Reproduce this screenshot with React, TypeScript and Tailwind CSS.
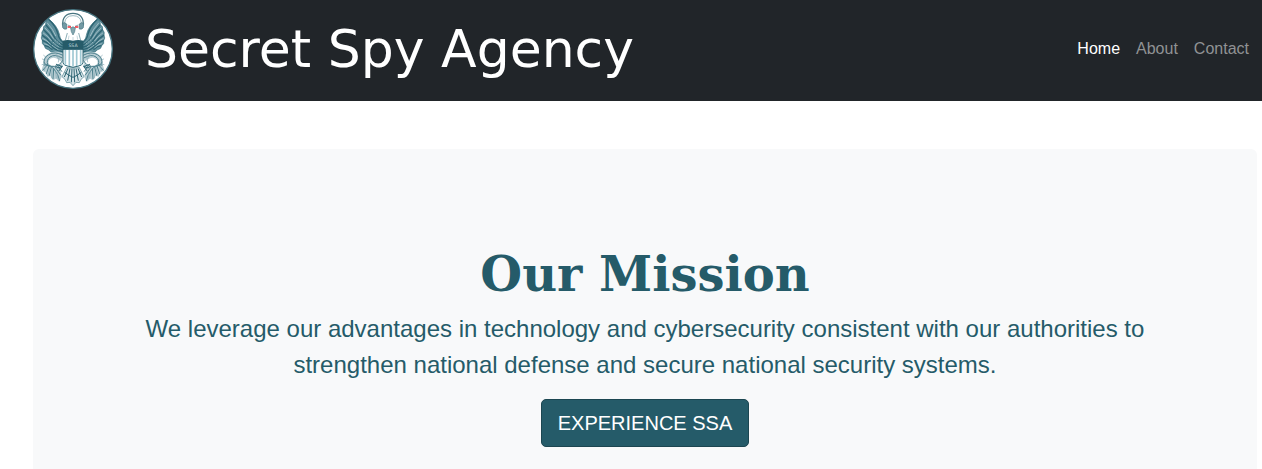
const navLinks = [
  { label: "Home", active: true },
  { label: "About", active: false },
  { label: "Contact", active: false },
];

function Wing() {
  return (
    <g strokeLinecap="round" strokeLinejoin="round">
      <path
        d="M47 30 Q37 34 38 47 Q29 52 31 62 Q24 69 27 79 Q22 87 28 95 Q25 104 34 110 Q35 120 46 122 Q53 132 67 130 Q76 138 90 134 L90 98 Q80 89 79 75 Q73 50 47 30Z"
        fill="#5f8f9c"
        stroke="#3d7280"
        strokeWidth="2"
      />
      <g fill="none" stroke="#2c6473" strokeWidth="4">
        <path d="M48 32 Q69 51 75 75 Q78 91 89 99" />
        <path d="M39 48 Q55 64 64 84 Q70 97 88 107" />
        <path d="M32 62 Q48 76 57 91 Q67 108 88 114" />
        <path d="M28 79 Q42 87 52 100 Q66 117 88 121" />
        <path d="M29 95 Q42 99 51 109 Q66 124 88 128" />
        <path d="M36 110 Q47 111 57 121" />
      </g>
      <g fill="none" stroke="#bcd2d8" strokeWidth="2">
        <path d="M43 42 Q60 60 68 80" />
        <path d="M36 57 Q52 72 61 88" />
        <path d="M31 72 Q46 82 55 95" />
        <path d="M29 88 Q42 94 52 105" />
        <path d="M35 104 Q46 106 55 116" />
        <path d="M66 92 L82 106 M61 100 L79 115 M58 109 L78 124" strokeDasharray="4 4" />
      </g>
    </g>
  );
}

function Talon() {
  return (
    <g strokeLinecap="round" strokeLinejoin="round">
      <path
        d="M90 132 Q62 121 45 135 Q28 145 31 166 L26 182 L37 190 L43 203 L52 201 L60 214 L69 209 L79 219 L86 204 L82 181 L90 172 L84 158 Q77 174 61 170 Q43 168 47 155 Q54 143 69 148 L84 157 L90 151Z"
        fill="#b9ced4"
      />
      <g fill="none" stroke="#4c808d" strokeWidth="3">
        <path d="M88 138 Q65 126 47 137 Q30 147 34 165" />
        <path d="M86 146 Q65 134 51 144 Q39 153 44 167" />
        <path d="M34 162 Q42 175 65 172 Q81 170 88 155" />
        <path d="M33 168 Q52 164 65 183 Q76 196 80 215" />
        <path d="M42 169 L29 184 M48 171 L40 194 M55 174 L49 199 M62 180 L60 209" />
        <path d="M66 174 L83 198 M73 169 L86 187" />
      </g>
      <g fill="none" stroke="#85a9b3" strokeWidth="2">
        <path d="M39 145 L32 139 M34 153 L28 150 M36 164 L27 167 M69 136 L76 149 M79 143 L76 159" />
        <path d="M38 173 L33 187 M52 174 L45 198 M58 177 L55 207 M68 187 L70 207 M72 190 L75 210" />
      </g>
      <path d="M88 172 L75 177 L68 172 M87 174 L78 185 M86 172 L70 166" fill="none" stroke="#2c6473" strokeWidth="3" />
    </g>
  );
}

function Seal() {
  return (
    <svg viewBox="0 0 240 240" className="size-20 shrink-0" role="img" aria-label="SSA seal">
      <circle cx="120" cy="120" r="118" fill="#fff" stroke="#477581" strokeWidth="4" />
      <Wing />
      <g transform="translate(240 0) scale(-1 1)">
        <Wing />
      </g>
      <Talon />
      <g transform="translate(240 0) scale(-1 1)">
        <Talon />
      </g>
      <path
        d="M102 174 L87 203 L96 211 L101 221 L111 220 L120 230 L129 220 L139 221 L144 211 L153 203 L138 174Z"
        fill="#d6e4e8"
        stroke="#4c808d"
        strokeWidth="2"
      />
      <path
        d="M105 178 L94 204 M111 178 L104 215 M117 178 L115 220 M123 178 L125 220 M129 178 L136 215 M135 178 L146 204 M95 190 L108 199 L120 205 L132 199 L145 190"
        fill="none"
        stroke="#2c6473"
        strokeWidth="3"
      />
      <path d="M104 51 Q106 38 120 37 Q134 38 136 51 L137 72 Q140 84 145 97 L95 97 Q100 84 103 72Z" fill="#fff" />
      <path d="M103 72 L97 94 M137 72 L143 94" stroke="#8badb6" strokeWidth="3" />
      <path d="M108 80 L106 92 M132 80 L134 92 M120 84 V94" stroke="#a9c3ca" strokeWidth="2" />
      <path d="M90 49 C86 25 101 13 120 13 C139 13 154 25 150 49" fill="none" stroke="#477581" strokeWidth="4" />
      <path d="M95 42 Q97 20 120 20 Q143 20 145 42" fill="none" stroke="#9ab8c0" strokeWidth="3" />
      <path d="M88 43 Q95 38 101 45 V60 Q93 62 89 56Z M152 43 Q145 38 139 45 V60 Q147 62 151 56Z" fill="#7299a4" stroke="#477581" strokeWidth="2" />
      <path d="M113 57 Q120 50 127 57 L125 68 L120 78 L115 68Z" fill="#84a6af" stroke="#527f8b" strokeWidth="2" />
      <path d="M104 48 L114 52 M136 48 L126 52" stroke="#527f8b" strokeWidth="2" />
      <path d="M104 54 H114 M126 54 H136" stroke="#f02c37" strokeWidth="5" />
      <path d="M90 120 H150 V162 Q147 170 136 171 L120 175 L104 171 Q93 170 90 162Z" fill="#fff" stroke="#2c6473" strokeWidth="3" />
      <path d="M97 122 V167 M109 122 V171 M120 122 V173 M131 122 V171 M143 122 V167" stroke="#9fc8d3" strokeWidth="5" />
      <path d="M89 95 Q104 91 120 95 Q136 91 151 95 V122 H89Z" fill="#255b69" />
      <text x="120" y="114" textAnchor="middle" fill="#b4cbd1" fontFamily="DejaVu Sans, sans-serif" fontSize="14">
        SSA
      </text>
    </svg>
  );
}

export default function App() {
  return (
    <div className="flex min-h-screen flex-col bg-white font-['Liberation_Sans',sans-serif] text-[#255b69]">
      <header className="flex items-center justify-between bg-[#212529] pt-[9px] pr-[13px] pb-3 pl-[33px]">
        <a href="#" className="flex items-center gap-8 text-white">
          <Seal />
          <span className="font-['DejaVu_Sans',sans-serif] text-[52px] leading-[80px]">Secret Spy Agency</span>
        </a>
        <nav className="flex gap-4 text-base">
          {navLinks.map((link) => (
            <a
              key={link.label}
              href="#"
              aria-current={link.active ? "page" : undefined}
              className={link.active ? "text-white" : "text-[#909294]"}
            >
              {link.label}
            </a>
          ))}
        </nav>
      </header>
      <main className="flex grow flex-col pt-12 pr-[5px] pl-[33px]">
        <section className="grow rounded-t-md bg-[#f8f9fa] px-24 pt-24 pb-5 text-center">
          <h1 className="mb-2 font-['DejaVu_Serif',serif] text-5xl leading-[58px] font-bold">Our Mission</h1>
          <p className="mb-4 text-2xl leading-9">
            We leverage our advantages in technology and cybersecurity consistent with our authorities to strengthen
            national defense and secure national security systems.
          </p>
          <button
            type="button"
            className="rounded-[5px] border border-[#1c4651] bg-[#255b69] px-4 py-2 text-xl leading-[30px] text-white"
          >
            EXPERIENCE SSA
          </button>
        </section>
      </main>
    </div>
  );
}
